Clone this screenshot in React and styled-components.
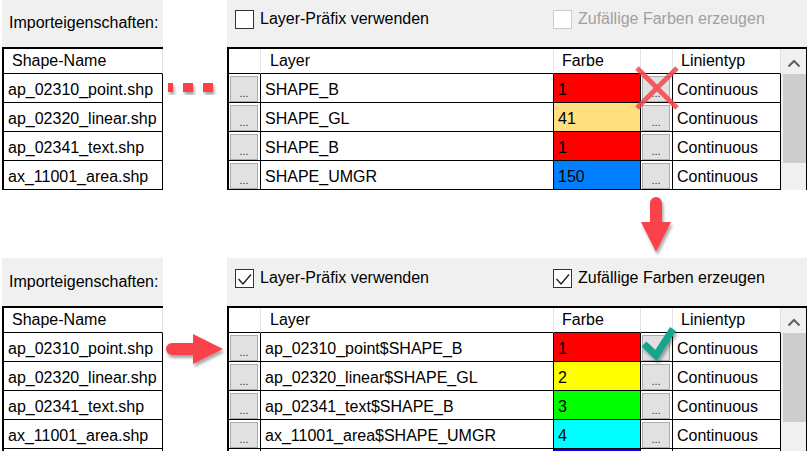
import React from 'react';
import styled, { createGlobalStyle } from 'styled-components';

const GlobalStyle = createGlobalStyle`
  html, body {
    margin: 0;
    padding: 0;
    background: #ffffff;
  }
  body {
    width: 809px;
    height: 451px;
    overflow: hidden;
    font-family: "Liberation Sans", Arial, sans-serif;
    color: #000;
  }
`;

// ganze Seite: zwei Zustände übereinander
const Page = styled.div`
  position: relative;
  width: 809px;
  height: 451px;
  overflow: hidden;
  display: flex;
  flex-direction: column;
  gap: 68px;
`;

const Section = styled.div`
  display: flex;
  flex-shrink: 0;
  gap: 64px;
  padding-left: 2px;
  margin-top: ${(p) => (p.$first ? '-1px' : '0')};
`;

// linke Spalte mit Shape-Namen
const LeftPanel = styled.div`
  width: 161px;
  display: flex;
  flex-direction: column;
`;

const RightPanel = styled.div`
  width: 580px;
  display: flex;
  flex-direction: column;
`;

const Caption = styled.div`
  height: 48px;
  background: #f0f0f0;
  display: flex;
  align-items: center;
  padding-left: 7px;
  font-size: 16px;
  box-sizing: border-box;
`;

const OptionsBar = styled.div`
  height: 48px;
  background: #f0f0f0;
  display: flex;
  align-items: flex-start;
  padding: 10px 0 0 8px;
  box-sizing: border-box;
`;

const CheckLabel = styled.label`
  display: flex;
  align-items: center;
  gap: 6px;
  width: ${(p) => p.$width || 'auto'};
  font-size: 16px;
  line-height: 20px;
  color: ${(p) => (p.$disabled ? '#a0a0a0' : '#000')};
`;

const Box = styled.span`
  width: 19px;
  height: 19px;
  box-sizing: border-box;
  background: #fff;
  border: 1px solid ${(p) => (p.$disabled ? '#cccccc' : '#333333')};
  display: flex;
  flex-shrink: 0;

  svg {
    display: block;
  }
`;

const NameTable = styled.div`
  border-top: 2px solid #000;
  border-left: 2px solid #000;
  display: flex;
  flex-direction: column;
`;

const DataGrid = styled.div`
  border-top: 2px solid #000;
  border-left: 2px solid #000;
  border-right: 1px solid #000;
  display: flex;
`;

const Columns = styled.div`
  flex: 1;
  display: grid;
  grid-template-columns: 32px 293px 87px 32px 108px;
  grid-auto-rows: auto;
`;

const HeadCell = styled.div`
  height: 25px;
  box-sizing: border-box;
  border-bottom: 1px solid #000;
  border-right: 1px solid #e3e3e3;
  padding-left: ${(p) => p.$pad || '8px'};
  font-size: 16px;
  line-height: 24px;
  white-space: nowrap;
  background: #fff;
`;

const Cell = styled.div`
  height: 29px;
  box-sizing: border-box;
  border-bottom: 1px solid #000;
  border-right: 1px solid #000;
  padding: 3px 0 0 4px;
  font-size: 16px;
  line-height: 25px;
  white-space: nowrap;
  overflow: hidden;
  background: ${(p) => p.$bg || '#fff'};
`;

const ButtonCell = styled.div`
  height: 29px;
  box-sizing: border-box;
  border-bottom: 1px solid #000;
  border-right: 1px solid #000;
  padding: 2px 2px 0 1px;
  background: #fff;
  display: flex;
`;

const DotsButton = styled.span`
  flex: 1;
  box-sizing: border-box;
  background: #e1e1e1;
  border: 1px solid #adadad;
  display: flex;
  align-items: flex-end;
  justify-content: center;
  font-size: 11px;
  line-height: 11px;
  padding-bottom: 2px;
  color: #1f2f4a;
`;

// vertikale Scrollleiste rechts
const ScrollBar = styled.div`
  width: 25px;
  background: #f0f0f0;
  display: flex;
  flex-direction: column;
`;

const ScrollArrow = styled.div`
  height: 25px;
  display: flex;
  align-items: center;
  justify-content: center;
  padding-top: 3px;
  box-sizing: border-box;
`;

const Thumb = styled.div`
  height: 89px;
  margin-left: 2px;
  background: #cdcdcd;
`;

const Overlay = styled.svg`
  position: absolute;
  left: 0;
  top: 0;
  pointer-events: none;
`;

const topRows = [
  { name: 'ap_02310_point.shp', layer: 'SHAPE_B', color: '#ff0000', aci: '1' },
  { name: 'ap_02320_linear.shp', layer: 'SHAPE_GL', color: '#ffdf80', aci: '41' },
  { name: 'ap_02341_text.shp', layer: 'SHAPE_B', color: '#ff0000', aci: '1' },
  { name: 'ax_11001_area.shp', layer: 'SHAPE_UMGR', color: '#0080ff', aci: '150' },
];

// letzte Zeile ist nur angeschnitten sichtbar
const bottomRows = [
  { name: 'ap_02310_point.shp', layer: 'ap_02310_point$SHAPE_B', color: '#ff0000', aci: '1' },
  { name: 'ap_02320_linear.shp', layer: 'ap_02320_linear$SHAPE_GL', color: '#ffff00', aci: '2' },
  { name: 'ap_02341_text.shp', layer: 'ap_02341_text$SHAPE_B', color: '#00ff00', aci: '3' },
  { name: 'ax_11001_area.shp', layer: 'ax_11001_area$SHAPE_UMGR', color: '#00ffff', aci: '4' },
  { name: '', layer: '', color: '#0000ff', aci: '' },
];

const CheckBox = ({ checked, disabled }) => (
  <Box $disabled={disabled}>
    {checked && (
      <svg width="17" height="17" viewBox="0 0 17 17">
        <polyline points="2.5,9 7,14 15,4.5" fill="none" stroke="#222" strokeWidth="1.4" />
      </svg>
    )}
  </Box>
);

const Dots = ({ empty }) => (
  <ButtonCell>
    <DotsButton>{empty ? '' : '...'}</DotsButton>
  </ButtonCell>
);

const ImportSection = ({ rows, checked, first }) => (
  <Section $first={first}>
    <LeftPanel>
      <Caption>Importeigenschaften:</Caption>
      <NameTable>
        <HeadCell>Shape-Name</HeadCell>
        {rows.map((r, i) => (
          <Cell key={i}>{r.name}</Cell>
        ))}
      </NameTable>
    </LeftPanel>

    <RightPanel>
      <OptionsBar>
        <CheckLabel $width="318px">
          <CheckBox checked={checked} />
          Layer-Präfix verwenden
        </CheckLabel>
        <CheckLabel $disabled={!checked}>
          <CheckBox checked={checked} disabled={!checked} />
          Zufällige Farben erzeugen
        </CheckLabel>
      </OptionsBar>
      <DataGrid>
        <Columns>
          <HeadCell />
          <HeadCell $pad="9px">Layer</HeadCell>
          <HeadCell>Farbe</HeadCell>
          <HeadCell />
          <HeadCell>Linientyp</HeadCell>
          {rows.map((r, i) => (
            <React.Fragment key={i}>
              <Dots empty={!r.name} />
              <Cell>{r.layer}</Cell>
              <Cell $bg={r.color}>{r.aci}</Cell>
              <Dots empty={!r.name} />
              <Cell>{r.name ? 'Continuous' : ''}</Cell>
            </React.Fragment>
          ))}
        </Columns>
        <ScrollBar>
          <ScrollArrow>
            <svg width="14" height="9" viewBox="0 0 14 9">
              <polyline points="1.5,7.5 7,2 12.5,7.5" fill="none" stroke="#606060" strokeWidth="2" />
            </svg>
          </ScrollArrow>
          <Thumb />
        </ScrollBar>
      </DataGrid>
    </RightPanel>
  </Section>
);

export default function App() {
  return (
    <>
      <GlobalStyle />
      <Page>
        <ImportSection rows={topRows} checked={false} first />
        <ImportSection rows={bottomRows} checked />

        {/* Hinweise: Pfeile, Kreuz, Haken */}
        <Overlay width="809" height="451" viewBox="0 0 809 451">
          <defs>
            <filter id="shadow" x="-30%" y="-30%" width="160%" height="160%">
              <feDropShadow dx="1.5" dy="3" stdDeviation="1.8" floodColor="#000" floodOpacity="0.35" />
            </filter>
          </defs>
          <g fill="#f9434a" filter="url(#shadow)">
            <rect x="168" y="83" width="5" height="9" />
            <rect x="183" y="83" width="10" height="9" />
            <rect x="203" y="83" width="10" height="9" />
          </g>
          <g stroke="#f4444b" strokeWidth="5" opacity="0.85">
            <line x1="637" y1="68" x2="677" y2="108" />
            <line x1="677" y1="68" x2="637" y2="108" />
          </g>
          <path
            d="M650 203 A6 6 0 0 1 662 203 L662 222 L671 222 L656 252 L641 222 L650 222 Z"
            fill="#f9434a"
            filter="url(#shadow)"
          />
          <path
            d="M172 343 L193 343 L193 334 L223 349 L193 364 L193 355 L172 355 A6 6 0 0 1 172 343 Z"
            fill="#f9434a"
            filter="url(#shadow)"
          />
          <polyline
            points="644,344 656,355.5 673,329"
            fill="none"
            stroke="#17a58a"
            strokeWidth="7"
            filter="url(#shadow)"
          />
        </Overlay>
      </Page>
    </>
  );
}
